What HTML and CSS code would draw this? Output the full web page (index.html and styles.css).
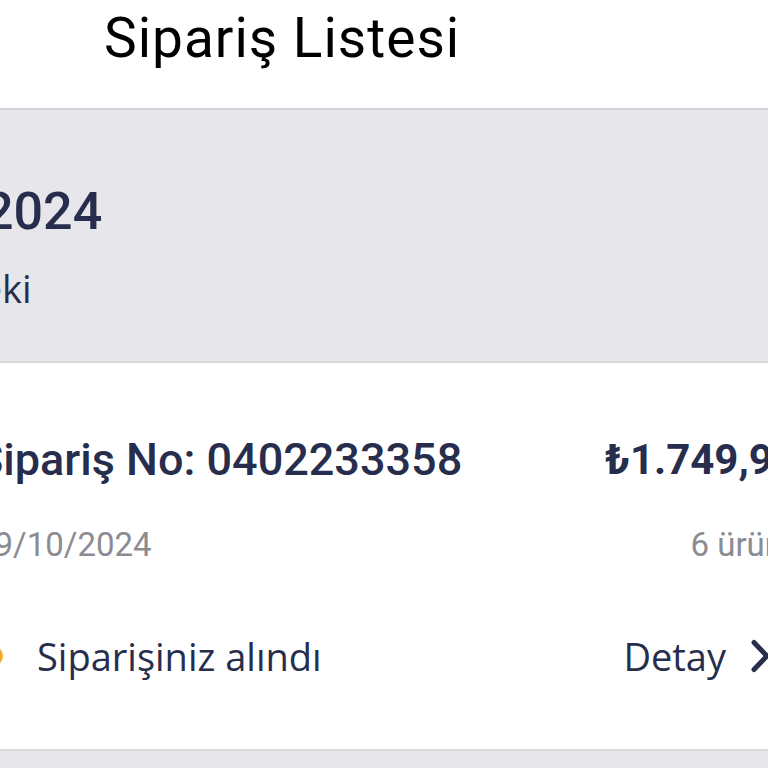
FILE: index.html
```html
<!DOCTYPE html>
<html lang="tr">
<head>
<meta charset="utf-8">
<link rel="stylesheet" href="styles.css">
</head>
<body>
<div class="screen">
  <header class="topbar">
    <h1 class="title">Sipariş Listesi</h1>
  </header>
  <section class="summary">
    <div class="summary-date">Ekim 2024</div>
    <div class="summary-sub">Son 30 gündeki</div>
  </section>
  <article class="order">
    <div class="row row-top">
      <div class="order-no">Sipariş No: 0402233358</div>
      <div class="price">₺1.749,90</div>
    </div>
    <div class="row row-mid">
      <div class="date">29/10/2024</div>
      <div class="count">6 ürün</div>
    </div>
    <div class="row row-status">
      <div class="status"><span class="dot"></span><span class="status-text">Siparişiniz alındı</span></div>
      <div class="detail"><span class="detail-text">Detay</span>
        <svg class="chev" viewBox="0 0 47 34" width="47" height="34"><path d="M4 3.5 L17 17 L4 30.5" fill="none" stroke="#272d4c" stroke-width="5" stroke-linecap="round" stroke-linejoin="round"/></svg>
      </div>
    </div>
  </article>
  <section class="summary next"></section>
</div>
</body>
</html>
```
FILE: styles.css
```css
html, body {
  margin: 0;
  padding: 0;
  width: 768px;
  height: 768px;
  overflow: hidden;
  background: #ffffff;
}
.screen {
  margin-left: -60px;
  width: 893px;
  font-family: Roboto, "Liberation Sans", sans-serif;
  color: #272d4c;
}
.topbar {
  height: 110px;
  background: #ffffff;
  border-bottom: 2px solid #d4d4d8;
  display: flex;
  align-items: flex-start;
  padding-left: 164px;
  box-sizing: border-box;
}
.title {
  margin: 0;
  padding-top: 5px;
  font-size: 55px;
  font-weight: 400;
  color: #000000;
  line-height: 66px;
  letter-spacing: 1px;
}
.summary {
  background: #e7e7eb;
  height: 253px;
  border-bottom: 2px solid #d9d9de;
  box-sizing: border-box;
  padding: 70px 0 0 36px;
}
.summary-date {
  font-size: 52px;
  font-weight: 500;
  line-height: 64px;
  margin-left: -120px;
}
.summary-sub {
  margin-top: 20px;
  font-size: 38px;
  line-height: 48px;
  font-family: "Open Sans", sans-serif;
  margin-left: -216px;
}
.order {
  background: #fff;
  height: 388px;
  padding: 71px 36px 0 36px;
  box-sizing: border-box;
  border-bottom: 2px solid #dcdce0;
}
.row {
  display: flex;
  justify-content: space-between;
  align-items: center;
}
.order-no {
  font-size: 45px;
  font-weight: 500;
  line-height: 52px;
}
.price {
  font-size: 42px;
  font-weight: 700;
  line-height: 52px;
}
.row-mid {
  margin-top: 37px;
  color: #8b8b93;
  font-size: 33px;
  line-height: 44px;
}
.count {
  margin-right: 14px;
}
.row-status {
  margin-top: 65px;
}
.status {
  display: flex;
  align-items: center;
}
.dot {
  width: 20px;
  height: 20px;
  border-radius: 50%;
  background: #f1a92c;
  margin-left: 7px;
  margin-right: 34px;
}
.status-text, .detail-text {
  font-family: "Open Sans", sans-serif;
  font-size: 38px;
  line-height: 48px;
}
.detail {
  display: flex;
  align-items: center;
  gap: 24px;
}
.chev {
  display: block;
}
.summary.next {
  height: 40px;
  border-bottom: none;
  padding: 0;
}
```
